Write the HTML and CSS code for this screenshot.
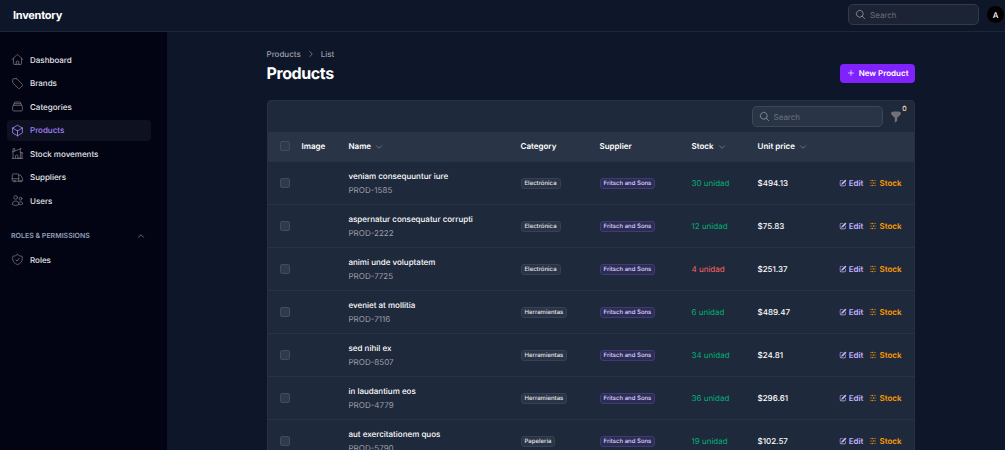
FILE: index.html
```html
<!DOCTYPE html>
<html lang="en">
<head>
    <meta charset="UTF-8" />
    <meta name="viewport" content="width=device-width, initial-scale=1.0" />
    <title>Products - Inventory</title>
    <link rel="stylesheet" href="styles.css">
</head>
<body>
    <!-- icon set -->
    <svg class="sprite" aria-hidden="true">
        <symbol id="i-home" viewBox="0 0 24 24"><path d="m2.25 12 8.954-8.955c.44-.439 1.152-.439 1.591 0L21.75 12M4.5 9.75v10.125c0 .621.504 1.125 1.125 1.125H9.75v-4.875c0-.621.504-1.125 1.125-1.125h2.25c.621 0 1.125.504 1.125 1.125V21h4.125c.621 0 1.125-.504 1.125-1.125V9.75M8.25 21h8.25"/></symbol>
        <symbol id="i-tag" viewBox="0 0 24 24"><path d="M9.568 3H5.25A2.25 2.25 0 0 0 3 5.25v4.318c0 .597.237 1.17.659 1.591l9.581 9.581c.699.699 1.78.872 2.607.33a18.095 18.095 0 0 0 5.223-5.223c.542-.827.369-1.908-.33-2.607L11.16 3.66A2.25 2.25 0 0 0 9.568 3Z"/></symbol>
        <symbol id="i-stack" viewBox="0 0 24 24"><path d="M6 6.878V6a2.25 2.25 0 0 1 2.25-2.25h7.5A2.25 2.25 0 0 1 18 6v.878m-12 0c.235-.083.487-.128.75-.128h10.5c.263 0 .515.045.75.128m-12 0A2.25 2.25 0 0 0 4.5 9v.878m13.5-3A2.25 2.25 0 0 1 19.5 9v.878m0 0a2.246 2.246 0 0 0-.75-.128H5.25c-.263 0-.515.045-.75.128m15 0A2.25 2.25 0 0 1 21 12v6a2.25 2.25 0 0 1-2.25 2.25H5.25A2.25 2.25 0 0 1 3 18v-6c0-.98.626-1.813 1.5-2.122"/></symbol>
        <symbol id="i-cube" viewBox="0 0 24 24"><path d="m21 7.5-9-5.25L3 7.5m18 0-9 5.25m9-5.25v9l-9 5.25M3 7.5l9 5.25M3 7.5v9l9 5.25m0-9v9"/></symbol>
        <symbol id="i-building" viewBox="0 0 24 24"><path d="M8.25 21v-4.875c0-.621.504-1.125 1.125-1.125h2.25c.621 0 1.125.504 1.125 1.125V21m0 0h4.5V3.545M12.75 21h7.5V10.75M2.25 21h1.5m18 0h-18M2.25 9l4.5-1.636M18.75 3l-1.5.545m0 6.205 3 1m1.5.5-1.5-.5M6.75 7.364V3h-3v18m3-13.636 10.5-3.819"/></symbol>
        <symbol id="i-truck" viewBox="0 0 24 24"><path d="M8.25 18.75a1.5 1.5 0 0 1-3 0m3 0a1.5 1.5 0 0 0-3 0m3 0h6m-9 0H3.375a1.125 1.125 0 0 1-1.125-1.125V14.25m17.25 4.5a1.5 1.5 0 0 1-3 0m3 0a1.5 1.5 0 0 0-3 0m3 0h1.125c.621 0 1.129-.504 1.09-1.124a17.902 17.902 0 0 0-3.213-9.193 2.056 2.056 0 0 0-1.58-.86H14.25M16.5 18.75h-2.25m0-11.177v-.958c0-.568-.422-1.048-.987-1.106a48.554 48.554 0 0 0-10.026 0 1.106 1.106 0 0 0-.987 1.106v7.635m12-6.677v6.677m0 4.5v-4.5m0 0h-12"/></symbol>
        <symbol id="i-users" viewBox="0 0 24 24"><path d="M15 19.128a9.38 9.38 0 0 0 2.625.372 9.337 9.337 0 0 0 4.121-.952 4.125 4.125 0 0 0-7.533-2.493M15 19.128v-.003c0-1.113-.285-2.16-.786-3.07M15 19.128v.106A12.318 12.318 0 0 1 8.624 21c-2.331 0-4.512-.645-6.374-1.766l-.001-.109a6.375 6.375 0 0 1 11.964-3.07M12 6.375a3.375 3.375 0 1 1-6.75 0 3.375 3.375 0 0 1 6.75 0Zm8.25 2.25a2.625 2.625 0 1 1-5.25 0 2.625 2.625 0 0 1 5.25 0Z"/></symbol>
        <symbol id="i-shield" viewBox="0 0 24 24"><path d="M9 12.75 11.25 15 15 9.75m-3-7.036A11.959 11.959 0 0 1 3.598 6 11.99 11.99 0 0 0 3 9.749c0 5.592 3.824 10.29 9 11.623 5.176-1.332 9-6.03 9-11.622 0-1.31-.21-2.571-.598-3.751h-.152c-3.196 0-6.1-1.248-8.25-3.285Z"/></symbol>
        <symbol id="i-search" viewBox="0 0 24 24"><path d="m21 21-5.197-5.197m0 0A7.5 7.5 0 1 0 5.196 5.196a7.5 7.5 0 0 0 10.607 10.607Z"/></symbol>
        <symbol id="i-plus" viewBox="0 0 24 24"><path d="M12 4.5v15m7.5-7.5h-15"/></symbol>
        <symbol id="i-down" viewBox="0 0 24 24"><path d="m19.5 8.25-7.5 7.5-7.5-7.5"/></symbol>
        <symbol id="i-up" viewBox="0 0 24 24"><path d="m4.5 15.75 7.5-7.5 7.5 7.5"/></symbol>
        <symbol id="i-right" viewBox="0 0 24 24"><path d="m8.25 4.5 7.5 7.5-7.5 7.5"/></symbol>
        <symbol id="i-funnel" viewBox="0 0 20 20"><path d="M2.628 1.601C5.028 1.206 7.49 1 10 1s4.973.206 7.372.601a.75.75 0 0 1 .628.74v2.288a2.25 2.25 0 0 1-.659 1.59l-4.682 4.683a2.25 2.25 0 0 0-.659 1.59v3.037c0 .684-.31 1.33-.844 1.757l-1.937 1.55A.75.75 0 0 1 8 18.25v-5.757a2.25 2.25 0 0 0-.659-1.591L2.659 6.22A2.25 2.25 0 0 1 2 4.629V2.34a.75.75 0 0 1 .628-.74Z"/></symbol>
        <symbol id="i-edit" viewBox="0 0 20 20"><path d="m5.433 13.917 1.262-3.155A4 4 0 0 1 7.58 9.42l6.92-6.918a2.121 2.121 0 0 1 3 3l-6.92 6.918c-.383.383-.84.685-1.343.886l-3.154 1.262a.5.5 0 0 1-.65-.65Z"/><path d="M3.5 5.75c0-.69.56-1.25 1.25-1.25H10A.75.75 0 0 0 10 3H4.75A2.75 2.75 0 0 0 2 5.75v9.5A2.75 2.75 0 0 0 4.75 18h9.5A2.75 2.75 0 0 0 17 15.25V10a.75.75 0 0 0-1.5 0v5.25c0 .69-.56 1.25-1.25 1.25h-9.5c-.69 0-1.25-.56-1.25-1.25v-9.5Z"/></symbol>
        <symbol id="i-adjust" viewBox="0 0 20 20"><path d="M10 3.75a2 2 0 1 0-4 0 2 2 0 0 0 4 0ZM17.25 4.5a.75.75 0 0 0 0-1.5h-5.5a.75.75 0 0 0 0 1.5h5.5ZM5 3.75a.75.75 0 0 1-.75.75h-1.5a.75.75 0 0 1 0-1.5h1.5a.75.75 0 0 1 .75.75ZM4.25 17a.75.75 0 0 0 0-1.5h-1.5a.75.75 0 0 0 0 1.5h1.5ZM17.25 17a.75.75 0 0 0 0-1.5h-5.5a.75.75 0 0 0 0 1.5h5.5ZM9 10a.75.75 0 0 1-.75.75h-5.5a.75.75 0 0 1 0-1.5h5.5A.75.75 0 0 1 9 10ZM17.25 10.75a.75.75 0 0 0 0-1.5h-1.5a.75.75 0 0 0 0 1.5h1.5ZM14 10a2 2 0 1 0-4 0 2 2 0 0 0 4 0ZM10 16.25a2 2 0 1 0-4 0 2 2 0 0 0 4 0Z"/></symbol>
    </svg>

    <header class="topbar">
        <a href="#" class="brand">Inventory</a>
        <div class="topbar-end">
            <label class="search">
                <svg class="icon"><use href="#i-search"/></svg>
                <input type="search" placeholder="Search" aria-label="Global search">
            </label>
            <button class="avatar" type="button" aria-label="User menu">A</button>
        </div>
    </header>

    <div class="layout">
        <aside class="sidebar">
            <nav class="nav">
                <a href="#" class="nav-item"><svg class="icon"><use href="#i-home"/></svg>Dashboard</a>
                <a href="#" class="nav-item"><svg class="icon"><use href="#i-tag"/></svg>Brands</a>
                <a href="#" class="nav-item"><svg class="icon"><use href="#i-stack"/></svg>Categories</a>
                <a href="#" class="nav-item active"><svg class="icon"><use href="#i-cube"/></svg>Products</a>
                <a href="#" class="nav-item"><svg class="icon"><use href="#i-building"/></svg>Stock movements</a>
                <a href="#" class="nav-item"><svg class="icon"><use href="#i-truck"/></svg>Suppliers</a>
                <a href="#" class="nav-item"><svg class="icon"><use href="#i-users"/></svg>Users</a>
            </nav>
            <button class="nav-group" type="button">ROLES &amp; PERMISSIONS<svg class="icon small"><use href="#i-up"/></svg></button>
            <a href="#" class="nav-item"><svg class="icon"><use href="#i-shield"/></svg>Roles</a>
        </aside>

        <main class="main">
            <div class="content">
                <div class="breadcrumbs">
                    <a href="#">Products</a>
                    <svg class="icon small"><use href="#i-right"/></svg>
                    <a href="#">List</a>
                </div>
                <div class="page-header">
                    <h1>Products</h1>
                    <button class="btn-new" type="button"><svg class="icon small"><use href="#i-plus"/></svg>New Product</button>
                </div>

                <section class="card">
                    <div class="toolbar">
                        <label class="search">
                            <svg class="icon"><use href="#i-search"/></svg>
                            <input type="search" placeholder="Search" aria-label="Search products">
                        </label>
                        <button class="filter" type="button" aria-label="Filter">
                            <svg class="icon solid"><use href="#i-funnel"/></svg>
                            <span class="filter-count">0</span>
                        </button>
                    </div>
                    <table class="products">
                        <colgroup>
                            <col class="col-check"><col class="col-image"><col class="col-name"><col class="col-category">
                            <col class="col-supplier"><col class="col-stock"><col class="col-price"><col>
                        </colgroup>
                        <thead>
                            <tr>
                                <th class="check"><input type="checkbox" aria-label="Select all"></th>
                                <th>Image</th>
                                <th>Name<svg class="icon small sort"><use href="#i-down"/></svg></th>
                                <th>Category</th>
                                <th>Supplier</th>
                                <th>Stock<svg class="icon small sort"><use href="#i-down"/></svg></th>
                                <th>Unit price<svg class="icon small sort"><use href="#i-down"/></svg></th>
                                <th></th>
                            </tr>
                        </thead>
                        <tbody id="rows"></tbody>
                    </table>
                </section>
            </div>
        </main>
    </div>

    <script>
        const products = [
            { name: "veniam consequuntur iure", sku: "PROD-1585", category: "Electrónica", stock: 30, price: 494.13 },
            { name: "aspernatur consequatur corrupti", sku: "PROD-2222", category: "Electrónica", stock: 12, price: 75.83 },
            { name: "animi unde voluptatem", sku: "PROD-7725", category: "Electrónica", stock: 4, price: 251.37 },
            { name: "eveniet at mollitia", sku: "PROD-7116", category: "Herramientas", stock: 6, price: 489.47 },
            { name: "sed nihil ex", sku: "PROD-8507", category: "Herramientas", stock: 34, price: 24.81 },
            { name: "in laudantium eos", sku: "PROD-4779", category: "Herramientas", stock: 36, price: 296.61 },
            { name: "aut exercitationem quos", sku: "PROD-5790", category: "Papelería", stock: 19, price: 102.57 }
        ];
        const minStock = 5;

        document.getElementById('rows').innerHTML = products.map(p => `
            <tr>
                <td class="check"><input type="checkbox" aria-label="Select ${p.name}"></td>
                <td></td>
                <td><div class="name">${p.name}</div><div class="sku">${p.sku}</div></td>
                <td><span class="badge">${p.category}</span></td>
                <td><span class="badge primary">Fritsch and Sons</span></td>
                <td class="stock ${p.stock < minStock ? 'low' : ''}">${p.stock} unidad</td>
                <td class="price">$${p.price.toFixed(2)}</td>
                <td>
                    <div class="actions">
                        <a href="#" class="edit"><svg class="icon solid"><use href="#i-edit"/></svg>Edit</a>
                        <a href="#" class="adjust"><svg class="icon solid"><use href="#i-adjust"/></svg>Stock</a>
                    </div>
                </td>
            </tr>`).join('');
    </script>
</body>
</html>
```
FILE: styles.css
```css
* {
    box-sizing: border-box;
}

body {
    margin: 0;
    height: 100vh;
    overflow: hidden;
    display: flex;
    flex-direction: column;
    background: #0e172a;
    color: #fff;
    font-family: Inter, "Liberation Sans", sans-serif;
    font-size: 8px;
    line-height: 12px;
    text-rendering: geometricPrecision;
}

a {
    color: inherit;
    text-decoration: none;
}

button, input {
    font: inherit;
    color: inherit;
    margin: 0;
    text-rendering: inherit;
}

button {
    border: none;
    padding: 0;
    background: none;
    cursor: pointer;
}

.sprite {
    display: none;
}

.icon {
    width: 13px;
    height: 13px;
    flex: none;
    fill: none;
    stroke: currentColor;
    stroke-width: 1.5;
    stroke-linecap: round;
    stroke-linejoin: round;
}

.icon.small {
    width: 8px;
    height: 8px;
    stroke-width: 2;
}

.icon.solid {
    fill: currentColor;
    stroke: none;
}

/* top bar */
.topbar {
    flex: none;
    height: 32px;
    padding: 0 1px 2px 13px;
    display: flex;
    align-items: center;
    justify-content: space-between;
    border-bottom: 1px solid #1e2738;
}

.brand {
    font-size: 11px;
    font-weight: 700;
    letter-spacing: -0.025em;
}

.topbar-end {
    display: flex;
    align-items: center;
    gap: 8px;
}

.search {
    width: 131px;
    height: 21px;
    padding: 0 6px;
    display: flex;
    align-items: center;
    gap: 4px;
    border: 1px solid #323b4b;
    border-radius: 5px;
    background: #1b2335;
    color: #8a8a94;
}

.search .icon {
    width: 11px;
    height: 11px;
    stroke-width: 2;
}

.search input {
    flex: 1;
    min-width: 0;
    padding: 0;
    border: none;
    outline: none;
    background: none;
}

.search input::placeholder {
    color: #71717b;
    opacity: 1;
}

.avatar {
    width: 17px;
    height: 17px;
    border-radius: 50%;
    background: #000;
    font-weight: 500;
}

/* sidebar */
.layout {
    flex: 1;
    min-height: 0;
    display: flex;
}

.sidebar {
    flex: none;
    width: 168px;
    padding: 17px 16px 0 7px;
    background: #020414;
    border-right: 1px solid #0d1526;
}

.nav {
    height: 162px;
    display: flex;
    flex-direction: column;
    justify-content: space-between;
}

.nav-item {
    height: 21px;
    padding: 0 4px;
    display: flex;
    align-items: center;
    gap: 6px;
    border-radius: 4px;
    color: #e4e4e7;
    font-weight: 500;
}

.nav-item .icon {
    color: #71717b;
}

.nav-item.active {
    background: #0e111f;
    color: #a684ff;
}

.nav-item.active .icon {
    color: #a684ff;
}

.nav-group {
    width: 100%;
    margin: 19px 0 7px;
    padding: 0 6px 0 4px;
    height: 12px;
    display: flex;
    align-items: center;
    justify-content: space-between;
    color: #90a1b9;
    font-size: 7px;
    font-weight: 600;
}

/* page */
.main {
    flex: 1;
    padding: 16px 8px 0 16px;
}

.content {
    max-width: 648px;
    margin: 0 auto;
}

.breadcrumbs {
    display: flex;
    align-items: center;
    gap: 6px;
    color: #9f9fa9;
    font-weight: 500;
}

.page-header {
    height: 26px;
    display: flex;
    align-items: center;
    justify-content: space-between;
}

h1 {
    margin: 0;
    font-size: 16px;
    line-height: 20px;
    font-weight: 700;
    letter-spacing: -0.025em;
}

.btn-new {
    height: 19px;
    padding: 0 6px 0 7px;
    display: flex;
    align-items: center;
    gap: 4px;
    border-radius: 4px;
    background: #7f22fe;
    font-weight: 600;
}

.card {
    margin-top: 14px;
    border: 1px solid #243044;
    border-radius: 4px 4px 0 0;
    background: #1e293b;
}

.toolbar {
    height: 31px;
    padding: 0 12px 0 0;
    display: flex;
    align-items: center;
    justify-content: flex-end;
    gap: 7px;
}

.toolbar .search {
    background: #293546;
    border-color: #3c4858;
}

.filter {
    position: relative;
    width: 12px;
    height: 12px;
    color: #71717b;
}

.filter .icon {
    display: block;
    width: 12px;
    height: 12px;
}

.filter-count {
    position: absolute;
    left: 11px;
    top: -6px;
    width: 8px;
    border-radius: 2px;
    background: #27272a;
    color: #fff;
    font-size: 7px;
    line-height: 8px;
}

/* table */
.products {
    width: 100%;
    table-layout: fixed;
    border-collapse: collapse;
}

.col-check { width: 34px; }
.col-image { width: 47px; }
.col-name { width: 172px; }
.col-category { width: 79px; }
.col-supplier { width: 92px; }
.col-stock { width: 66px; }
.col-price { width: 72px; }

th, td {
    padding: 0;
    text-align: left;
    white-space: nowrap;
    border-bottom: 1px solid #273346;
}

th {
    height: 29px;
    background: #293546;
    font-weight: 600;
}

td {
    height: 43px;
}

.sort {
    margin-left: 4px;
    color: #8a8a94;
    vertical-align: middle;
}

.check {
    padding-left: 12px;
}

.check input {
    appearance: none;
    display: block;
    width: 10px;
    height: 10px;
    border: 1px solid #414c5c;
    border-radius: 2px;
    background: #2f3a4a;
}

.name {
    font-weight: 500;
    margin-bottom: 2px;
}

.sku {
    color: #9f9fa9;
}

.badge {
    display: inline-block;
    padding: 0 3px;
    border: 1px solid #364153;
    border-radius: 3px;
    background: #293546;
    color: #e4e4e7;
    font-size: 6px;
    line-height: 9px;
    font-weight: 500;
    vertical-align: middle;
}

.badge.primary {
    background: #2c2c55;
    border-color: #403b73;
    color: #ddd6ff;
}

.stock {
    color: #00b377;
}

.stock.low {
    color: #ff6467;
}

.price {
    font-weight: 500;
}

.actions {
    display: flex;
    justify-content: flex-end;
    gap: 6px;
    padding-right: 12px;
    font-weight: 600;
}

.actions a {
    display: flex;
    align-items: center;
    gap: 2px;
}

.actions .icon {
    width: 8px;
    height: 8px;
}

.edit {
    color: #c4b4ff;
}

.adjust {
    color: #fe9a00;
}
```
